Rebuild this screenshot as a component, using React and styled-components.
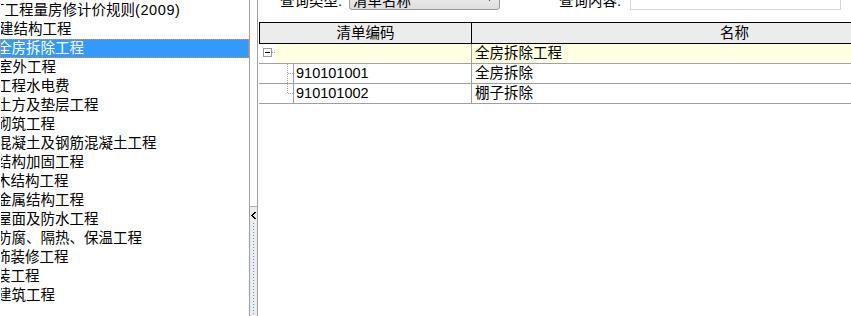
import React from "react";
import styled, { createGlobalStyle } from "styled-components";

const Global = createGlobalStyle`
  html, body { margin: 0; padding: 0; background: #fff; overflow: hidden; }
  body { font-family: "Liberation Sans", "Noto Sans CJK SC", sans-serif; color: #000; }
  #root { width: 851px; height: 316px; }
`;

const Frame = styled.div`
  display: flex;
  width: 851px;
  height: 316px;
  overflow: hidden;
  background: #fff;
`;

const LeftPanel = styled.div`
  flex: none;
  width: 249px;
  border-right: 1px solid #a0a0a0;
  overflow: hidden;
  padding-top: 1px;
`;

const TreeRow = styled.div`
  box-sizing: border-box;
  height: 19px;
  line-height: 17px;
  font-size: 14.5px;
  white-space: nowrap;
  overflow: hidden;
  text-indent: ${(p) => p.$shift}px;
  border: 1px dotted ${(p) => (p.$selected ? "#e8902a" : "transparent")};
  background: ${(p) => (p.$selected ? "#3399ff" : "transparent")};
  color: ${(p) => (p.$selected ? "#fff" : "#000")};
`;

const Latin = styled.span`
  letter-spacing: 0.6px;
`;

const Splitter = styled.div`
  flex: none;
  width: 7px;
  display: flex;
  flex-direction: column;
  border-right: 1px solid #a0a0a0;
`;

const SplitTop = styled.div`
  height: 206px;
  border-bottom: 1px solid #b4b4b4;
  background: #fff;
`;

const SplitGrip = styled.div`
  flex: 1;
  background: #ececec;
  display: flex;
  flex-direction: column;
  align-items: center;
  padding-top: 5px;
`;

const Dots = styled.div`
  flex: 1;
  width: 1px;
  margin-top: 4px;
  background: repeating-linear-gradient(to bottom, #3399ff 0 1px, transparent 1px 3px);
`;

const RightPanel = styled.div`
  flex: 1;
  min-width: 0;
  display: flex;
  flex-direction: column;
  overflow: hidden;
  background: #fff;
`;

const TopBar = styled.div`
  display: flex;
  align-items: center;
  height: 22px;
  margin-top: -12px;
  padding-left: 22px;
  font-size: 14.5px;
  white-space: nowrap;
`;

const Label = styled.span`
  flex: none;
  width: ${(p) => p.$w}px;
  margin-left: ${(p) => p.$ml || 0}px;
`;

const Combo = styled.div`
  box-sizing: border-box;
  flex: none;
  width: 151px;
  height: 22px;
  border: 1px solid #9a9a9a;
  border-radius: 3px;
  background: linear-gradient(#f4f4f4, #dedede);
  display: flex;
  align-items: center;
  justify-content: space-between;
  padding: 0 6px 0 3px;
`;

const Input = styled.div`
  box-sizing: border-box;
  flex: none;
  width: 211px;
  height: 22px;
  border: 1px solid #d4d4d8;
  background: #fff;
`;

const EdgeButton = styled.div`
  flex: none;
  align-self: flex-start;
  width: 20px;
  height: 26px;
  margin-left: 10px;
  border-left: 1px solid #3c3c3c;
  background: #fff;
`;

const Table = styled.div`
  margin-top: 12px;
  margin-left: 1px;
  width: 740px;
  font-size: 14.5px;
`;

const HeaderRow = styled.div`
  display: flex;
  height: 20px;
  border-top: 1px solid #000;
  border-bottom: 1px solid #000;
  border-left: 1px solid #000;
  background: #ececec;
`;

const HeadCell = styled.div`
  flex: none;
  width: ${(p) => p.$w}px;
  line-height: 20px;
  text-align: center;
  border-right: ${(p) => (p.$divider ? "1px solid #000" : "none")};
`;

const BodyRow = styled.div`
  display: flex;
  height: 19px;
  border-bottom: 1px solid #a0a0a0;
  background: #fff;
`;

const IndentCell = styled.div`
  flex: none;
  width: ${(p) => p.$w}px;
  height: 19px;
  margin-left: 1px;
  border-right: ${(p) => (p.$line ? "1px solid #a0a0a0" : "none")};
  background: #fff;
`;

const Cell = styled.div`
  flex: none;
  width: ${(p) => p.$w}px;
  line-height: 19px;
  padding-left: ${(p) => p.$pl}px;
  box-sizing: border-box;
  white-space: nowrap;
  overflow: hidden;
  background: ${(p) => (p.$group ? "#ffffe1" : "#fff")};
  border-right: ${(p) => (p.$divider ? "1px solid #a0a0a0" : "none")};
`;

const items = [
  { text: "丁工程量房修计价规则", latin: "(2009)", shift: -11 },
  { text: "建结构工程", shift: -2 },
  { text: "全房拆除工程", shift: -4, selected: true },
  { text: "室外工程", shift: -3 },
  { text: "工程水电费", shift: -4 },
  { text: "土方及垫层工程", shift: -4 },
  { text: "砌筑工程", shift: -4 },
  { text: "混凝土及钢筋混凝土工程", shift: -4 },
  { text: "结构加固工程", shift: -4 },
  { text: "木结构工程", shift: -5 },
  { text: "金属结构工程", shift: -4 },
  { text: "屋面及防水工程", shift: -4 },
  { text: "防腐、隔热、保温工程", shift: -4 },
  { text: "饰装修工程", shift: -5 },
  { text: "装工程", shift: -5 },
  { text: "建筑工程", shift: -4 },
];

const rows = [
  { code: "910101001", name: "全房拆除", last: false },
  { code: "910101002", name: "棚子拆除", last: true },
];

function Chevron() {
  return (
    <svg width="5" height="7" viewBox="0 0 5 7" shapeRendering="crispEdges">
      <path d="M3 0h2v1H3zM2 1h2v1H2zM1 2h2v1H1zM0 3h2v1H0zM1 4h2v1H1zM2 5h2v1H2zM3 6h2v1H3z" fill="#000" />
    </svg>
  );
}

function Expander() {
  return (
    <svg width="16" height="19" viewBox="0 0 16 19" shapeRendering="crispEdges">
      <rect x="3.5" y="4.5" width="8" height="8" fill="#fff" stroke="#9a9a9a" />
      <line x1="5" y1="8.5" x2="10" y2="8.5" stroke="#000" />
      <line x1="12" y1="8.5" x2="16" y2="8.5" stroke="#a0a0a0" strokeDasharray="1 1" />
    </svg>
  );
}

function TreeLines({ last }) {
  return (
    <svg width="33" height="19" viewBox="0 0 33 19" shapeRendering="crispEdges">
      <line x1="27.5" y1="0" x2="27.5" y2={last ? 10 : 19} stroke="#a0a0a0" strokeDasharray="1 1" />
      <line x1="28" y1="9.5" x2="33" y2="9.5" stroke="#a0a0a0" strokeDasharray="1 1" />
    </svg>
  );
}

export default function App() {
  return (
    <>
      <Global />
      <Frame>
        <LeftPanel>
          {items.map((it, i) => (
            <TreeRow key={i} $shift={it.shift} $selected={it.selected}>
              {it.text}
              {it.latin && <Latin>{it.latin}</Latin>}
            </TreeRow>
          ))}
        </LeftPanel>
        <Splitter>
          <SplitTop />
          <SplitGrip>
            <Chevron />
            <Dots />
          </SplitGrip>
        </Splitter>
        <RightPanel>
          <TopBar>
            <Label $w={69}>查询类型:</Label>
            <Combo>
              <span>清单名称</span>
              <svg width="7" height="4" viewBox="0 0 7 4">
                <path d="M0 0h7L3.5 4z" fill="#222" />
              </svg>
            </Combo>
            <Label $w={71} $ml={59}>查询内容:</Label>
            <Input />
            <EdgeButton />
          </TopBar>
          <Table>
            <HeaderRow>
              <HeadCell $w={211} $divider>清单编码</HeadCell>
              <HeadCell $w={525}>名称</HeadCell>
            </HeaderRow>
            <BodyRow>
              <IndentCell $w={16}>
                <Expander />
              </IndentCell>
              <Cell $w={196} $pl={0} $group $divider />
              <Cell $w={525} $pl={3} $group>全房拆除工程</Cell>
            </BodyRow>
            {rows.map((r) => (
              <BodyRow key={r.code}>
                <IndentCell $w={33} $line>
                  <TreeLines last={r.last} />
                </IndentCell>
                <Cell $w={178} $pl={2} $divider>{r.code}</Cell>
                <Cell $w={525} $pl={3}>{r.name}</Cell>
              </BodyRow>
            ))}
          </Table>
        </RightPanel>
      </Frame>
    </>
  );
}
